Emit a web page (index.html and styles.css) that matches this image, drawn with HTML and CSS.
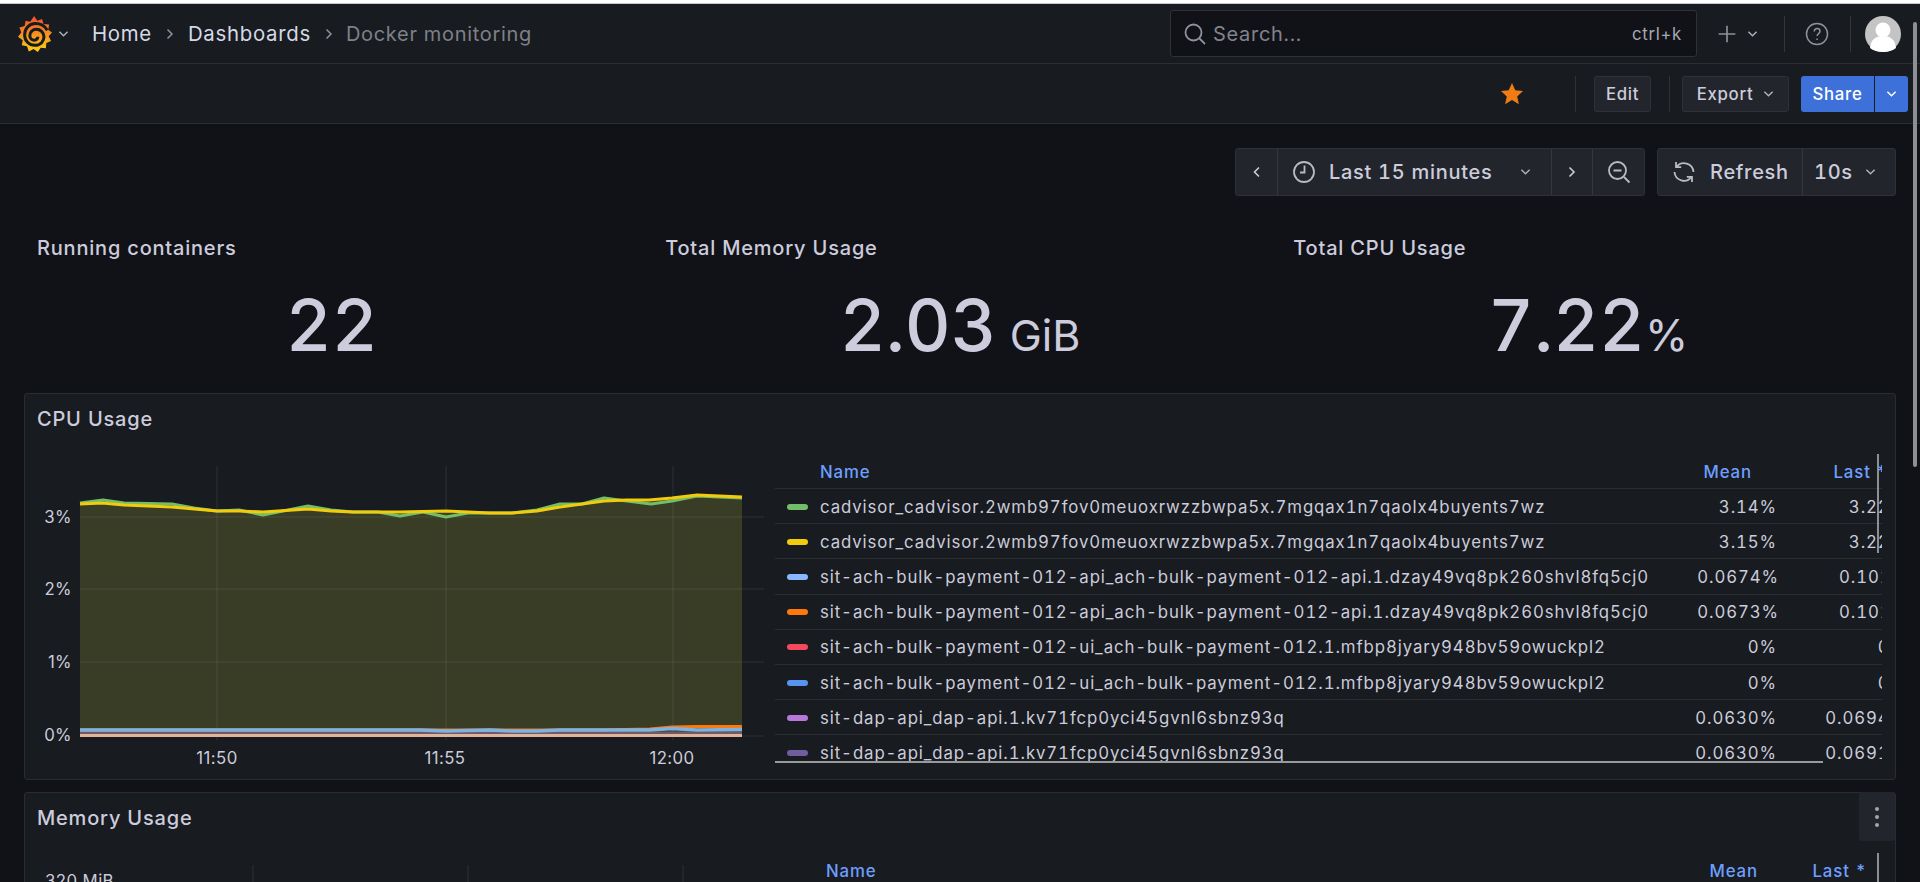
FILE: index.html
```html
<!DOCTYPE html>
<html lang="en">

<head>
    <meta charset="UTF-8">
    <title>Docker monitoring - Dashboards - Grafana</title>
    <link rel="stylesheet" href="styles.css">
</head>

<body>
    <div class="top-strip"></div>

    <header class="topbar">
        <svg class="logo" viewBox="0 0 36 38">
            <defs>
                <linearGradient id="logoGrad" x1="0" y1="1" x2="0" y2="0">
                    <stop offset="0" stop-color="#fcd116" />
                    <stop offset="1" stop-color="#f0502a" />
                </linearGradient>
            </defs>
            <path fill="url(#logoGrad)"
                d="M17 0l3.500 5 5-2 1.500 5.500 6 .5-1 5.500 4 3-3.500 4 2.500 5-5 2-.5 5.500-5.500-.5-3 4.500-4.500-3-5 2.500-2-5.500-5.500-1 1-5.500L0 22l3.500-4.500L1.500 12l5.500-1.500L8 5l5 1z" />
            <path fill="none" stroke="#181b1f" stroke-width="3.200"
                d="M31 15C28 10 23 8 18.500 8 11.500 8 7 13.500 7 20c0 6 4.500 11 11 11 6 0 9.500-4.500 9.500-9 0-5-4-8-8-8-4 0-7 3-7 6.500 0 3 2 5 5 5 2 0 3.500-1.500 3.500-3.500" />
        </svg>
        <svg class="chev logo-chev" viewBox="0 0 12 8"><path d="M1.500 1.500L6 6l4.500-4.500" /></svg>
        <nav class="crumbs">
            <span>Home</span>
            <svg class="crumb-sep" viewBox="0 0 8 12"><path d="M1.500 1.500L6 6l-4.500 4.500" /></svg>
            <span>Dashboards</span>
            <svg class="crumb-sep" viewBox="0 0 8 12"><path d="M1.500 1.500L6 6l-4.500 4.500" /></svg>
            <span class="crumb-current">Docker monitoring</span>
        </nav>
        <div class="search">
            <svg class="icon" viewBox="0 0 24 24"><circle cx="10.500" cy="10.500" r="8" /><path d="M16.500 16.500L22 22" /></svg>
            <span class="search-text">Search...</span>
            <span class="search-key">ctrl+k</span>
        </div>
        <svg class="icon plus" viewBox="0 0 24 24"><path d="M12 2v20M2 12h20" /></svg>
        <svg class="chev plus-chev" viewBox="0 0 12 8"><path d="M1.500 1.500L6 6l4.500-4.500" /></svg>
        <div class="nav-sep"></div>
        <svg class="icon help" viewBox="0 0 24 24">
            <circle cx="12" cy="12" r="10.500" />
            <path d="M9.200 9.500c0-1.800 1.300-2.900 2.900-2.900s2.900 1.100 2.900 2.700c0 2.300-2.900 2.300-2.900 4.700M12.100 16.600v1.400" />
        </svg>
        <div class="nav-sep"></div>
        <svg class="avatar" viewBox="0 0 36 36">
            <circle cx="18" cy="18" r="18" fill="#c4c4c4" />
            <circle cx="18" cy="14" r="7.500" fill="#fff" />
            <path d="M5 32c1-9 6-12 13-12s12 3 13 12c-3 2.600-8 4-13 4s-10-1.400-13-4z" fill="#fff" />
        </svg>
    </header>

    <div class="actionbar">
        <svg class="star" viewBox="0 0 24 24">
            <path d="M12 1l3.300 7.300 7.700.8-5.800 5.300 1.700 7.900L12 18l-6.900 4.300 1.700-7.900L1 9.100l7.700-.8z" />
        </svg>
        <div class="action-sep first-sep"></div>
        <button class="btn btn-edit">Edit</button>
        <div class="action-sep second-sep"></div>
        <button class="btn btn-export">Export
            <svg class="chev" viewBox="0 0 12 8"><path d="M1.500 1.500L6 6l4.500-4.500" /></svg>
        </button>
        <div class="share">
            <button class="btn-share">Share</button>
            <button class="btn-share-caret">
                <svg class="chev" viewBox="0 0 12 8"><path d="M1.500 1.500L6 6l4.500-4.500" /></svg>
            </button>
        </div>
    </div>

    <main class="dashboard">
        <div class="timebar">
            <div class="group">
                <div class="seg seg-arrow">
                    <svg class="arrow" viewBox="0 0 8 12"><path d="M6 1.500L1.500 6 6 10.500" /></svg>
                </div>
                <div class="seg seg-range">
                    <svg class="icon" viewBox="0 0 24 24"><circle cx="12" cy="12" r="10" /><path d="M12.500 5.500v7H8" /></svg>
                    <span>Last 15 minutes</span>
                    <svg class="chev" viewBox="0 0 12 8"><path d="M1.500 1.500L6 6l4.500-4.500" /></svg>
                </div>
                <div class="seg seg-arrow">
                    <svg class="arrow" viewBox="0 0 8 12"><path d="M1.500 1.500L6 6l-4.500 4.500" /></svg>
                </div>
                <div class="seg seg-zoom">
                    <svg class="icon" viewBox="0 0 24 24"><circle cx="10.500" cy="10.500" r="8.500" /><path d="M6.500 10.500h8M17 17l5.500 5.500" /></svg>
                </div>
            </div>
            <div class="group">
                <div class="seg seg-refresh">
                    <svg class="icon" viewBox="0 0 24 24">
                        <path d="M4.500 7A9.500 9.500 0 0 1 21.500 12M19.500 17A9.500 9.500 0 0 1 2.500 12M4 2v5.200h5.200M20 22v-5.200h-5.200" />
                    </svg>
                    <span>Refresh</span>
                </div>
                <div class="seg seg-interval">
                    <span>10s</span>
                    <svg class="chev" viewBox="0 0 12 8"><path d="M1.500 1.500L6 6l4.500-4.500" /></svg>
                </div>
            </div>
        </div>

        <section class="stats">
            <div class="stat">
                <h2 class="panel-title">Running containers</h2>
                <div class="stat-value">22</div>
            </div>
            <div class="stat">
                <h2 class="panel-title">Total Memory Usage</h2>
                <div class="stat-value">2.03<span class="stat-unit stat-unit-gib">GiB</span></div>
            </div>
            <div class="stat">
                <h2 class="panel-title">Total CPU Usage</h2>
                <div class="stat-value">7.22<span class="stat-unit stat-unit-pct">%</span></div>
            </div>
        </section>

        <section class="panel panel-cpu">
            <h2 class="panel-title">CPU Usage</h2>
            <div class="panel-body">
                <!-- viewBox uses page coordinates so points are easy to read off -->
                <svg class="chart chart-cpu" viewBox="25 454 750 316">
                    <path fill="#393d26"
                        d="M80 504L102 503 124 505 172 507 217 511 239 511 263 512 308 509 331 511 353 512 400 512 446 511 490 513 512 513 537 511 560 507 604 501 627 500 649 500 672 498 697 495 742 497V737H80z" />
                    <g class="grid">
                        <path d="M80 517H764M80 589H764M80 662H764M80 736H764" />
                        <path d="M217 466V740M446 466V740M673 466V740" />
                    </g>
                    <polyline class="line" stroke="#73bf69"
                        points="80 503 103 500 124 503 172 504 194 508 217 511 239 510 263 515 308 506 331 510 353 512 378 512 400 516 423 512 446 517 468 513 490 513 512 513 537 510 560 504 582 504 604 498 627 501 651 504 672 501 697 496 742 498" />
                    <polyline class="line" stroke="#f2cc0c"
                        points="80 504 102 503 124 505 172 507 217 511 239 511 263 512 308 509 331 511 353 512 400 512 446 511 490 513 512 513 537 511 560 507 604 501 627 500 649 500 672 498 697 495 742 497" />
                    <path fill="#e0b49a" d="M80 734h662v3H80z" />
                    <path fill="#6f5a6a" d="M80 731.500h662v2.500H80z" />
                    <polyline class="line" stroke="#ff780a" points="80 730 600 730 650 729 672 727 697 726.500 742 726.500" />
                    <polyline class="line line-low" stroke="#7eb2e0" points="80 730 420 730 446 731 490 730 512 731 537 731 560 730 650 730 672 728.500 697 730 742 729.500" />
                    <g class="tick-y">
                        <text x="72" y="523">3%</text>
                        <text x="72" y="595">2%</text>
                        <text x="72" y="668">1%</text>
                        <text x="72" y="741">0%</text>
                    </g>
                    <g class="tick-x">
                        <text x="217" y="764">11:50</text>
                        <text x="445" y="764">11:55</text>
                        <text x="672" y="764">12:00</text>
                    </g>
                </svg>
                <div class="legend">
                    <div class="legend-inner">
                        <div class="row row-head">
                            <span class="swatch swatch-none"></span>
                            <span class="name">Name</span>
                            <span class="mean">Mean</span>
                            <span class="last">Last *</span>
                        </div>
                        <div class="row"><span class="swatch c-green"></span><span class="name">cadvisor_cadvisor.2wmb97fov0meuoxrwzzbwpa5x.7mgqax1n7qaolx4buyents7wz</span><span class="mean">3.14%</span><span class="last">3.22%</span></div>
                        <div class="row"><span class="swatch c-yellow"></span><span class="name">cadvisor_cadvisor.2wmb97fov0meuoxrwzzbwpa5x.7mgqax1n7qaolx4buyents7wz</span><span class="mean">3.15%</span><span class="last">3.22%</span></div>
                        <div class="row"><span class="swatch c-lblue"></span><span class="name">sit-ach-bulk-payment-012-api_ach-bulk-payment-012-api.1.dzay49vq8pk260shvl8fq5cj0</span><span class="mean">0.0674%</span><span class="last">0.101%</span></div>
                        <div class="row"><span class="swatch c-orange"></span><span class="name">sit-ach-bulk-payment-012-api_ach-bulk-payment-012-api.1.dzay49vq8pk260shvl8fq5cj0</span><span class="mean">0.0673%</span><span class="last">0.101%</span></div>
                        <div class="row"><span class="swatch c-red"></span><span class="name">sit-ach-bulk-payment-012-ui_ach-bulk-payment-012.1.mfbp8jyary948bv59owuckpl2</span><span class="mean">0%</span><span class="last">0%</span></div>
                        <div class="row"><span class="swatch c-blue"></span><span class="name">sit-ach-bulk-payment-012-ui_ach-bulk-payment-012.1.mfbp8jyary948bv59owuckpl2</span><span class="mean">0%</span><span class="last">0%</span></div>
                        <div class="row"><span class="swatch c-purple"></span><span class="name">sit-dap-api_dap-api.1.kv71fcp0yci45gvnl6sbnz93q</span><span class="mean">0.0630%</span><span class="last">0.0694%</span></div>
                        <div class="row"><span class="swatch c-violet"></span><span class="name">sit-dap-api_dap-api.1.kv71fcp0yci45gvnl6sbnz93q</span><span class="mean">0.0630%</span><span class="last">0.0691%</span></div>
                    </div>
                    <div class="scroll-x"></div>
                    <div class="scroll-y"></div>
                </div>
            </div>
        </section>

        <section class="panel panel-mem">
            <h2 class="panel-title">Memory Usage</h2>
            <div class="panel-menu">
                <span class="dot"></span><span class="dot"></span><span class="dot"></span>
            </div>
            <div class="panel-body">
                <svg class="chart chart-mem" viewBox="25 853 756 60">
                    <g class="grid">
                        <path d="M253 865V913M468 865V913M683 865V913" />
                    </g>
                    <g class="tick-y">
                        <text x="114" y="887">320 MiB</text>
                    </g>
                </svg>
                <div class="legend legend-mem">
                    <div class="legend-inner">
                        <div class="row row-head">
                            <span class="swatch swatch-none"></span>
                            <span class="name">Name</span>
                            <span class="mean">Mean</span>
                            <span class="last">Last *</span>
                        </div>
                    </div>
                    <div class="scroll-y"></div>
                </div>
            </div>
        </section>
    </main>

    <div class="page-scroll"></div>
</body>

</html>
```

FILE: styles.css
```css
* {
    box-sizing: border-box;
}

body {
    margin: 0;
    height: 882px;
    overflow: hidden;
    font-family: Inter, "Noto Sans", sans-serif;
    font-size: 20px;
    font-variant-numeric: tabular-nums;
    letter-spacing: 0.7px;
    color: #ccccdc;
    background-color: #111217;
}

svg {
    display: block;
    flex: none;
}

.top-strip {
    height: 4px;
    background-color: #fff;
    border-bottom: 1px solid #c8c8c8;
}

.topbar {
    display: flex;
    align-items: center;
    height: 60px;
    padding: 0 19px 0 18px;
    background-color: #181b1f;
    border-bottom: 1px solid #2c2e33;
}

.logo {
    width: 34px;
    height: 36px;
}

.chev {
    width: 11px;
    height: 8px;
    fill: none;
    stroke: #aeb0bb;
    stroke-width: 1.6;
}

.logo-chev {
    margin-left: 6px;
}

.crumbs {
    display: flex;
    align-items: center;
    margin-left: 23px;
    font-size: 20.4px;
    color: #d5d9e6;
}

.crumb-sep {
    width: 8px;
    height: 12px;
    margin: 0 14px;
    fill: none;
    stroke: #8e9099;
    stroke-width: 1.5;
}

.crumb-current {
    margin-left: -1px;
    font-size: 20px;
    color: #7e8189;
}

.icon {
    width: 24px;
    height: 24px;
    fill: none;
    stroke: #b9bac5;
    stroke-width: 1.8;
}

.search {
    display: flex;
    align-items: center;
    width: 527px;
    height: 47px;
    margin-left: auto;
    padding: 0 14px 0 12px;
    background-color: #111217;
    border: 1px solid #2f3137;
    border-radius: 3px;
    color: #81848d;
}

.search .icon {
    stroke: #8f919b;
}

.search-text {
    margin-left: 6px;
}

.search-key {
    margin-left: auto;
    font-size: 16.8px;
    color: #a6a8b2;
}

.plus {
    width: 20px;
    height: 20px;
    margin-left: 20px;
    stroke: #8f919b;
    stroke-width: 2;
}

.plus-chev {
    margin-left: 10px;
}

.nav-sep {
    width: 1px;
    height: 36px;
    margin-left: 26px;
    background-color: #33353b;
}

.help {
    margin-left: 20px;
    stroke: #8f919b;
    stroke-width: 1.5;
}

.help + .nav-sep {
    margin-left: 21px;
}

.avatar {
    width: 36px;
    height: 36px;
    margin-left: 14px;
}

.actionbar {
    display: flex;
    align-items: center;
    justify-content: flex-end;
    height: 60px;
    padding-right: 12px;
    background-color: #181b1f;
    border-bottom: 1px solid #2c2e33;
}

.star {
    width: 24px;
    height: 24px;
    fill: #f07c16;
}

.action-sep {
    width: 1px;
    height: 36px;
    background-color: #2f3137;
}

.first-sep {
    margin: 0 18px 0 51px;
}

.second-sep {
    margin: 0 12px 0 18px;
}

.btn,
.btn-share,
.btn-share-caret {
    height: 36px;
    font-family: inherit;
    font-size: 16.8px;
    font-weight: 500;
    letter-spacing: 0.7px;
    color: #ccccdc;
    border-radius: 3px;
}

.btn {
    display: flex;
    align-items: center;
    justify-content: center;
    padding: 0;
    background-color: #22252b;
    border: 1px solid #2f3138;
}

.btn-edit {
    width: 57px;
}

.btn-export {
    gap: 10px;
    width: 107px;
}

.share {
    display: flex;
    margin-left: 12px;
}

.btn-share,
.btn-share-caret {
    border: none;
    color: #fff;
    background-color: #3d71d9;
}

.btn-share {
    width: 73px;
    padding: 0;
    border-radius: 3px 0 0 3px;
}

.btn-share-caret {
    display: flex;
    align-items: center;
    justify-content: center;
    width: 33px;
    padding: 0;
    margin-left: 1px;
    border-radius: 0 3px 3px 0;
}

.btn-share-caret .chev {
    stroke: #fff;
}

.dashboard {
    padding: 24px 24px 0;
}

.timebar {
    display: flex;
    justify-content: flex-end;
    gap: 12px;
}

.group {
    display: flex;
    height: 48px;
    background-color: #22252b;
    border: 1px solid #2f3138;
    border-radius: 3px;
}

.seg {
    display: flex;
    align-items: center;
    justify-content: center;
    font-weight: 500;
    border-left: 1px solid #35373d;
}

.seg:first-child {
    border-left: none;
}

.arrow {
    width: 8px;
    height: 12px;
    fill: none;
    stroke: #ccccdc;
    stroke-width: 1.6;
}

.seg-arrow {
    width: 41px;
}

.seg-range {
    justify-content: flex-start;
    width: 274px;
    padding: 0 20px 0 14px;
    gap: 13px;
}

.seg-range .chev {
    margin-left: auto;
}

.seg-zoom {
    width: 52px;
}

.seg-refresh {
    justify-content: flex-start;
    width: 144px;
    padding-left: 14px;
    gap: 14px;
}

.seg-interval {
    justify-content: flex-start;
    width: 93px;
    padding-left: 11px;
    gap: 12px;
}

.stats {
    display: grid;
    grid-template-columns: repeat(3, 1fr);
    gap: 12.5px;
    height: 167px;
    margin-top: 30px;
}

.panel-title {
    margin: 0;
    padding: 0 13px;
    font-size: 20px;
    font-weight: 500;
    letter-spacing: 0.8px;
    line-height: 24px;
}

.stat {
    padding-top: 10px;
}

.stat-value {
    margin-top: 22px;
    font-size: 71px;
    font-weight: 500;
    letter-spacing: 0;
    line-height: 86px;
    text-align: center;
    color: #ccccdc;
}

.stat-unit {
    font-size: 43px;
    font-weight: 400;
}

.stat-unit-gib {
    margin-left: 13px;
}

.stat-unit-pct {
    font-size: 44px;
}

.panel {
    position: relative;
    margin-top: 0;
    background-color: #181b1f;
    border: 1px solid #2a2c31;
    border-radius: 3px;
}

.panel .panel-title {
    height: 60px;
    padding: 13px 12px 0;
}

.panel-cpu {
    height: 387px;
}

.panel-mem {
    height: 300px;
    margin-top: 12px;
}

.panel-body {
    display: flex;
}

.chart-cpu {
    width: 750px;
    height: 316px;
}

.chart-mem {
    width: 756px;
    height: 60px;
}

.grid path {
    fill: none;
    stroke: rgba(204, 204, 220, 0.12);
    stroke-width: 1;
}

.line {
    fill: none;
    stroke-width: 3;
    stroke-linejoin: round;
}

.line-low {
    stroke-width: 3.5;
}

.tick-y text,
.tick-x text {
    font-family: Inter, sans-serif;
    font-size: 16.8px;
    font-variant-numeric: normal;
    letter-spacing: 0.4px;
    fill: #ccccdc;
}

.tick-y text {
    text-anchor: end;
}

.tick-x text {
    text-anchor: middle;
}

.legend {
    position: relative;
    width: 1107px;
    height: 309px;
    overflow: hidden;
}

.legend-mem {
    width: 1101px;
}

.legend-inner {
    width: 1132px;
}

.legend-mem .legend-inner {
    width: 1086px;
}

.row {
    display: flex;
    align-items: center;
    height: 35.2px;
    padding: 1px 0 0 12px;
    font-size: 16.8px;
    letter-spacing: 0.9px;
    white-space: nowrap;
    border-bottom: 1px solid #2a2d32;
}

.row-head {
    height: 35px;
    font-weight: 500;
    color: #6e9fff;
}

.legend-mem .row-head {
    border-bottom: none;
}

.swatch {
    flex: none;
    width: 21px;
    height: 6px;
    margin-right: 12px;
    border-radius: 3px;
}

.swatch-none {
    background: none;
}

.c-green { background-color: #73bf69; }
.c-yellow { background-color: #f2cc0c; }
.c-lblue { background-color: #8ab8ff; }
.c-orange { background-color: #ff780a; }
.c-red { background-color: #f2495c; }
.c-blue { background-color: #5794f2; }
.c-purple { background-color: #b877d9; }
.c-violet { background-color: #705da0; }

.name {
    flex: 1;
}

.mean,
.last {
    flex: none;
    text-align: right;
}

.mean {
    width: 130px;
}

.last {
    width: 130px;
}

.row-head .mean {
    padding-right: 25px;
}

.row-head .last {
    padding-right: 19px;
}

.legend-mem .row-head .mean {
    padding-right: 0;
}

.legend-mem .row-head .last {
    width: 109px;
    padding-right: 0;
}

.scroll-x {
    position: absolute;
    left: 0;
    top: 307px;
    width: 1048px;
    height: 2px;
    background-color: #9a9a9a;
}

.scroll-y {
    position: absolute;
    left: 1102px;
    top: 0;
    width: 2px;
    height: 99px;
    background-color: #8d8f94;
}

.legend-mem .scroll-y {
    left: 1096px;
}

.panel-menu {
    position: absolute;
    top: -1px;
    right: 0;
    display: flex;
    flex-direction: column;
    align-items: center;
    justify-content: center;
    gap: 4px;
    width: 36px;
    height: 49px;
    background-color: #22252b;
    border-radius: 3px;
}

.dot {
    width: 4px;
    height: 4px;
    background-color: #a3a5af;
    border-radius: 50%;
}

.page-scroll {
    position: absolute;
    left: 1913px;
    top: 22px;
    width: 4px;
    height: 445px;
    background-color: #8d8f94;
    border-radius: 2px;
}
```
